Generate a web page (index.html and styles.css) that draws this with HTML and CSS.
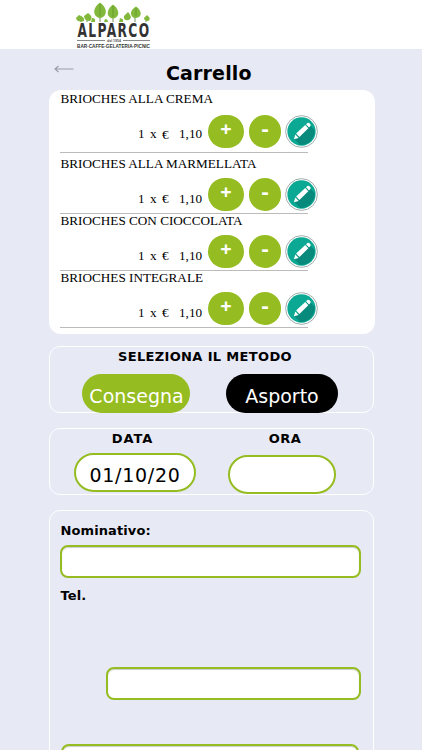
FILE: index.html
```html
<!DOCTYPE html>
<html lang="it">
<head>
  <meta charset="UTF-8">
  <title>Alparco - Carrello</title>
  <meta name="viewport" content="width=device-width, initial-scale=1.0">
  <link rel="stylesheet" href="styles.css">
</head>
<body>

  <svg width="0" height="0" class="defs">
    <symbol id="pencil" viewBox="0 0 32 32">
      <circle cx="16" cy="16" r="15.4" fill="#fff" stroke="#8f9c9c" stroke-width=".8"/>
      <circle cx="16" cy="16" r="13.7" fill="#0ba894"/>
      <path d="M9.2 23.2 L23.4 9.2 L28.8 14.6 A13.7 13.7 0 0 1 14.6 29.2 Z" fill="#078a7b"/>
      <path d="M8.6 23.6 L10 18.9 L13.3 22.2 Z M10.8 18 L19.6 9.8 L22.6 12.8 L14 21.4 Z M20.4 9 L22.1 7.6 Q23 7.2 23.8 8 L24.6 8.9 Q25.2 9.7 24.6 10.6 L23.3 12 Z" fill="#fff"/>
    </symbol>
  </svg>

  <header class="header">
    <svg class="logo" width="80" height="49" viewBox="0 0 80 49">
      <g stroke="#55752a" stroke-width=".8" fill="none">
        <path d="M26 12V22M39 14V22M61 15V22M13 18V22M7 20V22M48 19V22M72 20V22"/>
      </g>
      <g fill="#82b93c">
        <path d="M26 2.5C32 7 34 13 29 17Q26 19 23 17C18 13 20 7 26 2.5Z"/>
        <path d="M39 4.5C44 8 46 14 42.5 17Q39 20 35.5 17C32 14 34 8 39 4.5Z"/>
        <path d="M62 6.5C67 10 68 14.5 65 17Q61 19 58.5 17C55 13 58 9 62 6.5Z"/>
        <path d="M14 13Q20 17 16 21Q10 21 10 16Z"/>
        <path d="M5 15Q11 17 10 21Q3 23 2 18Z"/>
        <path d="M54 12Q59 17 55 20Q49 21 50 16Z"/>
        <path d="M46 18Q50 19 49 22H45Z"/>
        <path d="M73 15Q78 19 74 21Q70 21 70 18Z"/>
        <path d="M18 18Q22 18 21 22H17ZM31 19Q34 19 34 22H30Z"/>
      </g>
      <path d="M26 4V16M39 6V17M62 8V16" stroke="#5d9228" stroke-width=".7"/>
      <text class="logo-name" x="3.5" y="36.8" textLength="73" lengthAdjust="spacingAndGlyphs">ALPARCO</text>
      <path d="M3 40.5H31M49 40.5H76" stroke="#555" stroke-width=".7"/>
      <text class="logo-year" x="33" y="42" textLength="14" lengthAdjust="spacingAndGlyphs">dal 1954</text>
      <text class="logo-sub" x="3" y="48" textLength="73" lengthAdjust="spacingAndGlyphs">BAR·CAFFE·GELATERIA·PICNIC</text>
    </svg>
  </header>

  <main class="page">
    <div class="title-bar">
      <svg class="back" width="20" height="8" viewBox="0 0 20 8">
        <path d="M4.5 1L1 4L4.5 7M1 4H19.5" fill="none" stroke="#9a9cab" stroke-width="1.1"/>
      </svg>
      <h1>Carrello</h1>
    </div>

    <section class="cart">
      <div class="item first">
        <div class="name">BRIOCHES ALLA CREMA</div>
        <div class="line">
          <span class="qty">1</span><span class="per">x</span><span class="euro">€</span><span class="price">1,10</span>
          <button class="btn plus">+</button>
          <button class="btn minus">-</button>
          <svg class="edit" width="33" height="33"><use href="#pencil"/></svg>
        </div>
      </div>
      <div class="item second">
        <div class="name">BRIOCHES ALLA MARMELLATA</div>
        <div class="line">
          <span class="qty">1</span><span class="per">x</span><span class="euro">€</span><span class="price">1,10</span>
          <button class="btn plus">+</button>
          <button class="btn minus">-</button>
          <svg class="edit" width="33" height="33"><use href="#pencil"/></svg>
        </div>
      </div>
      <div class="item">
        <div class="name">BRIOCHES CON CIOCCOLATA</div>
        <div class="line">
          <span class="qty">1</span><span class="per">x</span><span class="euro">€</span><span class="price">1,10</span>
          <button class="btn plus">+</button>
          <button class="btn minus">-</button>
          <svg class="edit" width="33" height="33"><use href="#pencil"/></svg>
        </div>
      </div>
      <div class="item">
        <div class="name">BRIOCHES INTEGRALE</div>
        <div class="line">
          <span class="qty">1</span><span class="per">x</span><span class="euro">€</span><span class="price">1,10</span>
          <button class="btn plus">+</button>
          <button class="btn minus">-</button>
          <svg class="edit" width="33" height="33"><use href="#pencil"/></svg>
        </div>
      </div>
    </section>

    <section class="box method">
      <h2>SELEZIONA IL METODO</h2>
      <div class="choices">
        <button class="choice delivery">Consegna</button>
        <button class="choice takeaway">Asporto</button>
      </div>
    </section>

    <section class="box when">
      <div class="field date">
        <label for="data">DATA</label>
        <input type="text" id="data" value="01/10/20">
      </div>
      <div class="field time">
        <label for="ora">ORA</label>
        <input type="text" id="ora">
      </div>
    </section>

    <section class="box customer">
      <label for="nome">Nominativo:</label>
      <input type="text" id="nome" class="text-input">
      <label for="tel">Tel.</label>
      <input type="text" id="tel" class="text-input phone">
      <input type="text" class="text-input last">
    </section>
  </main>

</body>
</html>
```
FILE: styles.css
```css
:root {
  --bg: #e7e9f5;
  --green: #95bc20;
}

* {
  box-sizing: border-box;
}

body {
  margin: 0;
  height: 750px;
  overflow: hidden;
  background: var(--bg);
  color: #000;
  font-family: Verdana, "DejaVu Sans", sans-serif;
}

.defs {
  display: block;
}

.header {
  height: 49px;
  padding-left: 74px;
  background: #fff;
}

.logo {
  display: block;
}

.logo-name {
  font: bold 19.5px "DejaVu Sans Condensed", "DejaVu Sans", sans-serif;
  letter-spacing: 2px;
  fill: #333;
}

.logo-year {
  font: bold 3.5px "Liberation Sans", sans-serif;
  fill: #555;
}

.logo-sub {
  font: bold 6px "Liberation Sans", sans-serif;
  fill: #333;
}

.page {
  width: 326px;
  margin-left: 49px;
}

.title-bar {
  display: flex;
  height: 41px;
}

.back {
  margin: 16px 0 0 5px;
}

h1 {
  margin: 12px 0 0 92px;
  font-size: 19px;
  line-height: 24px;
  letter-spacing: 0.15px;
}

.cart {
  height: 244px;
  padding-left: 11px;
  background: #fff;
  border-radius: 12px;
  font-family: "Liberation Serif", serif;
  font-size: 13.2px;
}

.item {
  display: flex;
  flex-direction: column;
  justify-content: space-between;
  width: 248px;
  height: 57px;
  padding-bottom: 2px;
  border-bottom: 1px solid #bbb;
}

.item.first {
  height: 63px;
  padding: 1px 0 4px;
}

.item.second {
  height: 61px;
  padding-top: 3px;
}

.name {
  height: 16px;
  padding-left: 0.5px;
  line-height: 16px;
  white-space: nowrap;
}

.item:not(.first):not(.second) .name {
  line-height: 14px;
}

.line {
  display: flex;
  width: 260px;
  height: 33px;
  padding-left: 78px;
  line-height: 41px;
}

.first .line {
  line-height: 37px;
}

.qty {
  width: 12px;
}

.per {
  width: 12px;
}

.euro {
  width: 17px;
}

.first .euro {
  line-height: 40px;
}

.price {
  width: 29px;
}

.btn {
  height: 33px;
  padding: 0 0 6px;
  border: none;
  border-radius: 17px;
  background: var(--green);
  color: #fff;
  font: bold 20px/27px "Open Sans", sans-serif;
}

.plus {
  width: 36px;
  margin-right: 5px;
}

.minus {
  width: 32px;
  margin-right: 4px;
  padding-bottom: 9px;
  font-size: 22px;
  line-height: 24px;
}

.edit {
  flex: none;
}

.box {
  width: 325px;
  border: 1px solid #fff;
  border-radius: 11px;
}

h2,
label {
  margin: 0;
  font-size: 13px;
  font-weight: bold;
  line-height: 18px;
  letter-spacing: 0.1px;
}

.method {
  height: 67px;
  margin-top: 12px;
  padding-top: 1px;
}

h2 {
  padding-right: 13px;
  letter-spacing: 0.35px;
  text-align: center;
}

.choices {
  display: flex;
  gap: 36px;
  padding: 8px 0 0 32px;
}

.choice {
  height: 39px;
  padding: 5px 0 0;
  border: none;
  border-radius: 20px;
  color: #fff;
  font-family: inherit;
  font-size: 19px;
}

.delivery {
  width: 108px;
  padding-left: 1px;
  background: var(--green);
}

.takeaway {
  width: 112px;
  background: #000;
}

.when {
  display: flex;
  gap: 32px;
  height: 67px;
  margin-top: 15px;
  padding-left: 24px;
}

.field {
  display: flex;
  flex-direction: column;
}

.field label {
  line-height: 20px;
  letter-spacing: 0.4px;
  text-align: center;
}

.field input {
  width: 100%;
  height: 39px;
  margin-top: 4px;
  padding: 4px 0 0;
  border: 2px solid var(--green);
  border-radius: 20px;
  background: #fff;
  font-family: inherit;
  font-size: 19px;
  letter-spacing: 0.7px;
  text-align: center;
}

.date {
  width: 122px;
}

.date label {
  padding-right: 5px;
  letter-spacing: 0.9px;
}

.time {
  width: 108px;
}

.time label {
  padding-left: 6px;
}

.time input {
  margin-top: 6px;
}

.customer {
  display: flex;
  flex-direction: column;
  height: 300px;
  margin-top: 15px;
  padding: 11px 13px 0 10px;
}

.customer label {
  padding-left: 0.5px;
}

.text-input {
  flex: none;
  width: 301px;
  height: 33px;
  margin: 5px 0 9px;
  border: 2px solid var(--green);
  border-radius: 8px;
  background: #fff;
  box-shadow: inset 0 1px 1px #ccc;
}

.phone {
  width: 255px;
  margin: 62px 0 0 46px;
}

.last {
  width: 298px;
  margin: 44px 0 0 1px;
}
```
